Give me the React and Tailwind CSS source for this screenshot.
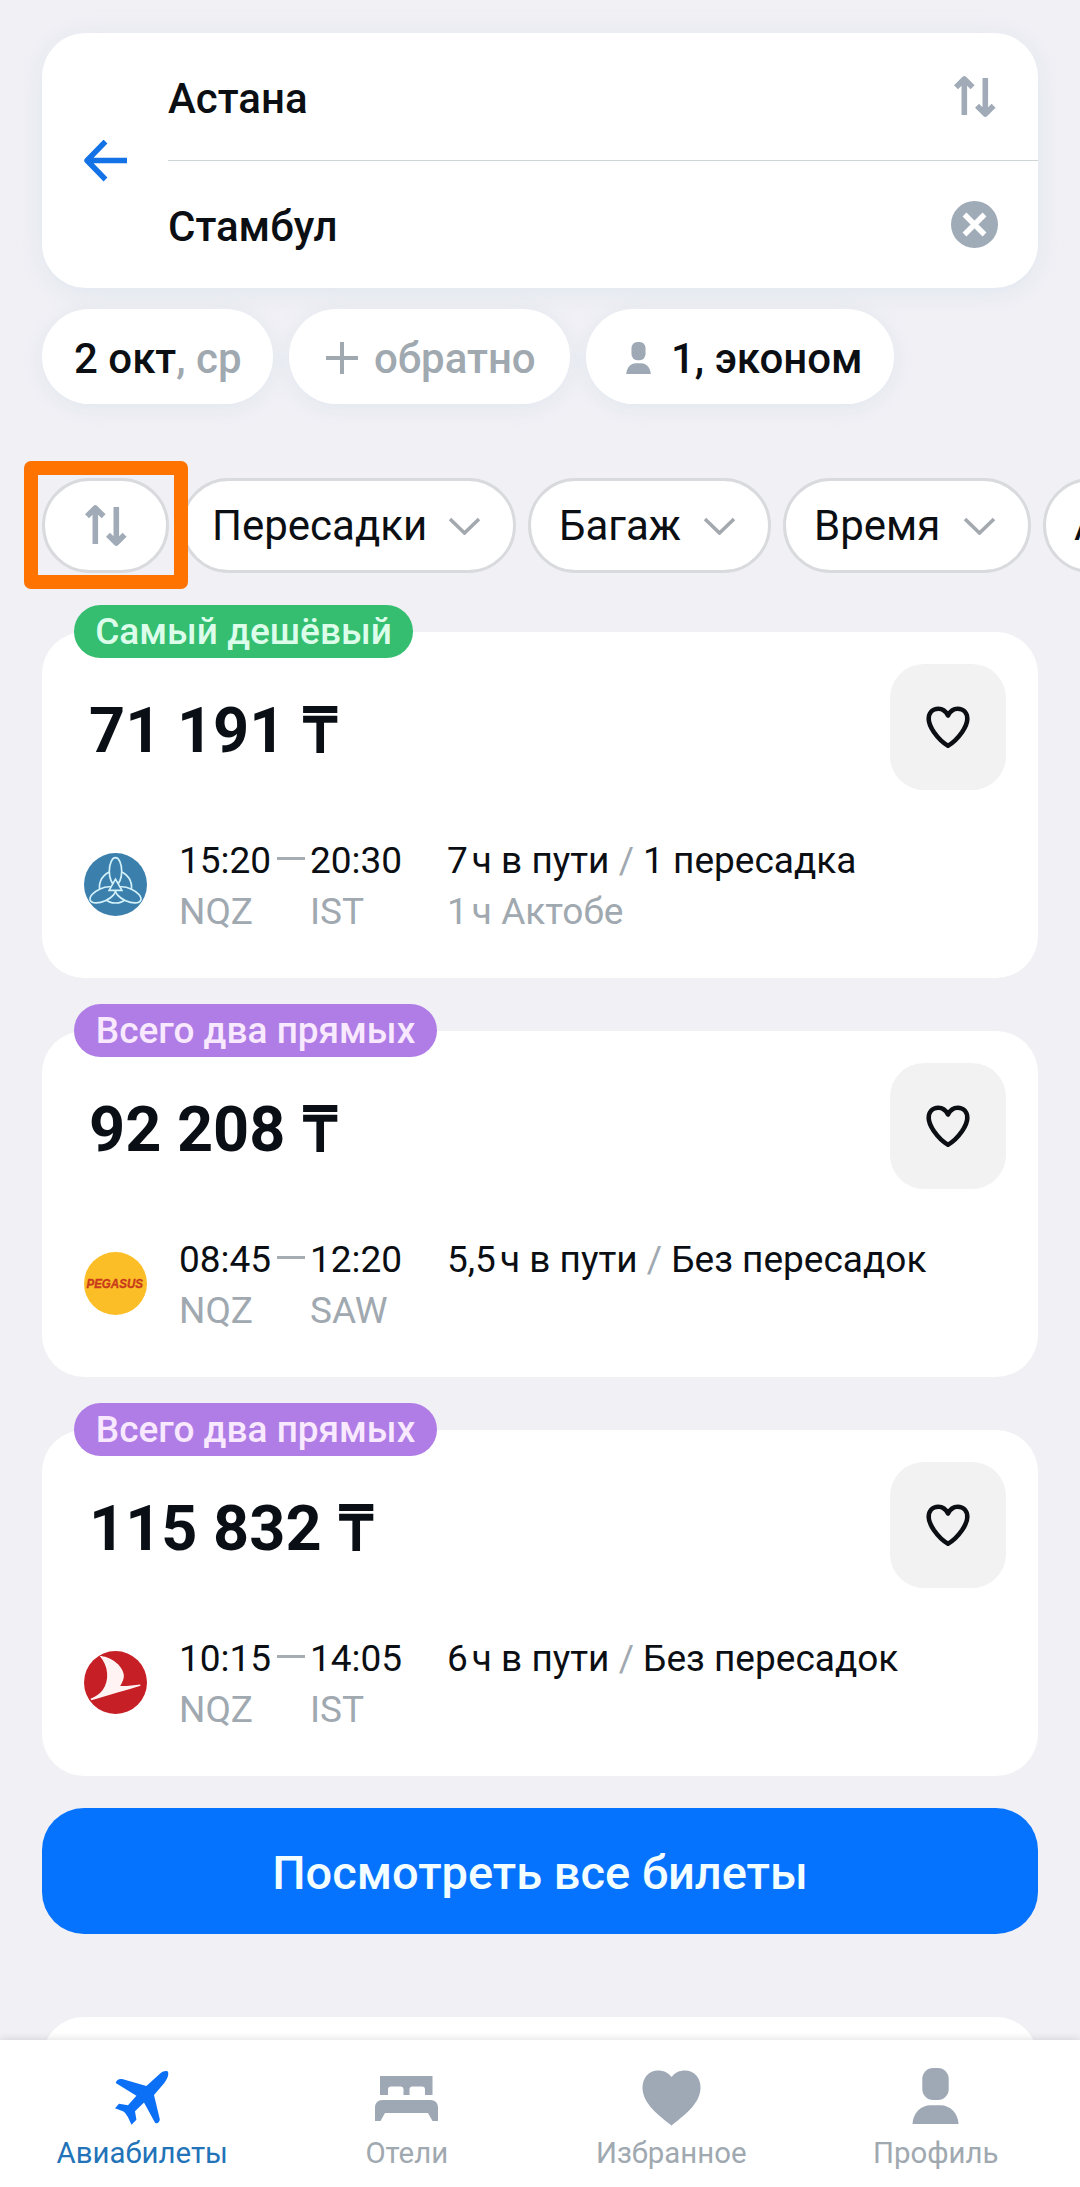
const tickets = [
  {
    id: 1,
    badge: "Самый дешёвый",
    badgeClass: "w-[339px] bg-[#35bd70] text-[#dcfdea]",
    price: "71 191",
    logo: "scat",
    departure: "15:20",
    arrival: "20:30",
    from: "NQZ",
    to: "IST",
    hours: "7",
    stops: "1 пересадка",
    layover: { hours: "1", city: "Актобе" },
  },
  {
    id: 2,
    badge: "Всего два прямых",
    badgeClass: "w-[363px] bg-[#af7de5] text-[#f9e9ff]",
    price: "92 208",
    logo: "pegasus",
    departure: "08:45",
    arrival: "12:20",
    from: "NQZ",
    to: "SAW",
    hours: "5,5",
    stops: "Без пересадок",
  },
  {
    id: 3,
    badge: "Всего два прямых",
    badgeClass: "w-[363px] bg-[#af7de5] text-[#f9e9ff]",
    price: "115 832",
    logo: "turkish",
    departure: "10:15",
    arrival: "14:05",
    from: "NQZ",
    to: "IST",
    hours: "6",
    stops: "Без пересадок",
  },
];

const SwapIcon = () => (
  <svg width="42" height="43" viewBox="0 0 42 43" fill="none" stroke="#a0abb7" strokeWidth="5.6" strokeLinejoin="round">
    <path d="M10.3 40V4M2 12.3l8.3-8.3 8.3 8.3" />
    <path d="M31.3 3v36M23 30.7l8.3 8.3 8.3-8.3" />
  </svg>
);

const BackIcon = () => (
  <svg width="44" height="42" viewBox="0 0 44 42" fill="none" stroke="#1272e6" strokeWidth="5.4" strokeLinejoin="round">
    <path d="M43 20.500H3M21.500 1.500L3 20.500 21.500 39.500" />
  </svg>
);

const ClearIcon = () => (
  <svg width="47" height="47" viewBox="0 0 47 47">
    <circle cx="23.5" cy="23.5" r="23.5" fill="#a0abb8" />
    <path d="M13.5 13.5l20 20M33.5 13.5l-20 20" stroke="#fff" strokeWidth="5.4" />
  </svg>
);

const ChevronIcon = () => (
  <svg width="32" height="19" viewBox="0 0 32 19" fill="none" stroke="#a3a9af" strokeWidth="3.6">
    <path d="M1 3L15.500 17 30 3" />
  </svg>
);

const PersonIcon = ({ width, height }) => (
  <svg width={width} height={height} viewBox="0 0 48 57" preserveAspectRatio="none" fill="#9fa9b6">
    <rect x="10.5" y="0" width="27" height="32.5" rx="11" />
    <path d="M0.5 57C1 46 9 38 19 38h10c10 0 18 8 18.500 19z" />
  </svg>
);

const HeartOutlineIcon = () => (
  <svg width="44" height="42" viewBox="0 0 44 42" fill="none" stroke="#0b0f14" strokeWidth="4.6" strokeLinejoin="round">
    <path d="M22 9.500C19.800 5 16 2.700 12.300 2.700 6.500 2.700 2.700 7 2.700 13c0 4.500 2.300 8.800 5.300 13.300C12 32 17 37 22 39.700c5-2.700 10-7.700 14-13.400 3-4.500 5.300-8.800 5.300-13.300 0-6-3.800-10.300-9.600-10.300C28 2.700 24.200 5 22 9.500z" />
  </svg>
);

const PlaneIcon = () => (
  <svg width="56" height="56" viewBox="0 0 56 56" fill="#0b70f5">
    <path d="M53.700 1.500c-2-1-5 0-7 1.500L32.400 16 9 9.300C5.500 8.600 2.500 9.500 1.700 13l20.700 12.800L14 35.300l-9-1.600-4 4.500 8 3.100c3 1.700 5.500 6.500 8.500 13.400l4.900-5-1.400-8.500 9-8.800 10.500 19.300c1.500 3 5.300 1.300 5.300-2.400L40 25l10.300-12C53 9.500 55.500 4 53.700 1.500z" />
  </svg>
);

const BedIcon = () => (
  <svg width="63" height="45" viewBox="0 0 63 45" fill="#9da8b4">
    <path d="M5 0h52.500v19H50v-5.500a3 3 0 0 0-3-3H37.500a3 3 0 0 0-3 3V19h-6v-5.500a3 3 0 0 0-3-3H16a3 3 0 0 0-3 3V19H5z" />
    <path d="M0 31.500C0 27 3 24 7.500 24h48c4.500 0 7.500 3 7.500 7.500V45h-5.500L53 37H10l-4.500 8H0z" />
  </svg>
);

const HeartIcon = () => (
  <svg width="59" height="56" viewBox="0 0 59 56" fill="#9fa9b6">
    <path d="M29.500 7C26 2.500 21.500.500 16 .500 7 .500.500 7.500.500 17.500c0 14 12 25 29 38 17-13 29-24 29-38C58.500 7.500 52 .500 43 .500c-5.500 0-10 2-13.500 6.500z" />
  </svg>
);

const AirlineLogo = ({ name }) => {
  if (name === "scat") {
    return (
      <svg width="63" height="63" viewBox="0 0 64 64" fill="#3b7fad" stroke="#d3f2fb" strokeWidth="1.7">
        <circle cx="32" cy="32" r="32" stroke="none" />
        <circle cx="32" cy="34.500" r="16.300" />
        <ellipse cx="19" cy="42.500" rx="13.800" ry="6.600" transform="rotate(-24 19 42.500)" />
        <ellipse cx="45" cy="42.500" rx="13.800" ry="6.600" transform="rotate(24 45 42.500)" />
        <ellipse cx="32" cy="18.500" rx="6.300" ry="13.800" />
        <path d="M32 26.500l6.500 11.500h-13z" />
      </svg>
    );
  }

  if (name === "pegasus") {
    return (
      <svg width="63" height="63" viewBox="0 0 64 64">
        <circle cx="32" cy="32" r="32" fill="#fcbe26" />
        <text
          transform="translate(2.500 36.500) scale(0.87 1)"
          fill="#c93a1c"
          stroke="#c93a1c"
          strokeWidth="0.4"
          fontFamily="Liberation Sans, sans-serif"
          fontSize="13.500"
          fontWeight="700"
          fontStyle="italic"
        >
          PEGASUS
        </text>
      </svg>
    );
  }

  return (
    <svg width="63" height="63" viewBox="0 0 64 64">
      <circle cx="32" cy="32" r="32" fill="#c62026" />
      <path
        d="M16 5c9 0 23.500 8.500 24.500 19.500 .300 4-1.500 7.500-3.700 11 6 .200 14-.500 20.300-1.500l.300 1.200C45 39 24 45 7.300 50l-.700-1.500C12 46 16 43.500 19 39.500 26 30 25 15 16 5z"
        fill="#fff3f3"
      />
    </svg>
  );
};

const SearchForm = () => (
  <div className="flex h-[255px] rounded-[44px] bg-white shadow-[0_4px_26px_rgba(160,200,215,0.22)]">
    <div className="flex w-[126px] items-center pl-[42px]">
      <BackIcon />
    </div>
    <div className="flex flex-1 flex-col text-[42px] font-medium text-[#0b0f14]">
      <div className="flex h-[128px] items-center justify-between border-b border-[#cfd4d6] pr-[42px]">
        <span className="pt-[4px]">Астана</span>
        <SwapIcon />
      </div>
      <div className="flex h-[127px] items-center justify-between pr-[40px]">
        <span className="pt-[4px]">Стамбул</span>
        <ClearIcon />
      </div>
    </div>
  </div>
);

const TripOptions = () => (
  <div className="mt-[21px] flex gap-[16px] text-[42px] font-medium text-[#0b0f14]">
    <div className="flex h-[95px] w-[231px] items-center rounded-full bg-white pt-[3px] pl-[32px] shadow-[0_4px_22px_rgba(160,200,215,0.2)]">
      <span>
        2 окт<span className="text-[#a0a8b0]">, ср</span>
      </span>
    </div>
    <div className="flex h-[95px] w-[281px] items-center rounded-full bg-white pt-[3px] pl-[37px] text-[#a0a8b0] shadow-[0_4px_22px_rgba(160,200,215,0.2)]">
      <svg width="32" height="32" viewBox="0 0 32 32" stroke="#a0a8b0" strokeWidth="4">
        <path d="M16 0v32M0 16h32" />
      </svg>
      <span className="ml-[16px]">обратно</span>
    </div>
    <div className="flex h-[95px] w-[308px] items-center rounded-full bg-white pt-[3px] pl-[40px] shadow-[0_4px_22px_rgba(160,200,215,0.2)]">
      <PersonIcon width="25" height="32" />
      <span className="ml-[20px]">1, эконом</span>
    </div>
  </div>
);

const FilterChip = ({ label, className }) => (
  <div
    className={`flex h-[95px] shrink-0 items-center justify-between rounded-full border-[3px] border-[#d9dadd] bg-white pr-[32px] pl-[28px] text-[42px] text-[#0b0f14] ${className}`}
  >
    <span>{label}</span>
    <ChevronIcon />
  </div>
);

const Filters = () => (
  <div className="mt-[74px] -mr-[42px] flex gap-[12px]">
    <div className="relative flex h-[95px] w-[127px] shrink-0 items-center justify-center rounded-full border-[3px] border-[#d9dadd] bg-white">
      <SwapIcon />
      {/* highlight frame around the sort button */}
      <div className="absolute -top-[20px] -left-[21px] z-10 h-[128px] w-[164px] rounded-[7px] border-[14px] border-[#ff7300]" />
    </div>
    <FilterChip label="Пересадки" className="w-[335px]" />
    <FilterChip label="Багаж" className="w-[243px]" />
    <FilterChip label="Время" className="w-[248px]" />
    <FilterChip label="Авиакомпании" className="w-[400px]" />
  </div>
);

const Hours = ({ value }) => (
  <>
    {value}
    <span className="ml-[4px]">ч</span>
  </>
);

const Ticket = ({ ticket }) => (
  <article className="relative flex h-[346px] flex-col rounded-[42px] bg-white pt-[32px] pr-[32px] pl-[42px]">
    <div
      className={`absolute -top-[27px] left-[32px] flex h-[53px] items-center justify-center rounded-full text-[37px] font-medium whitespace-nowrap ${ticket.badgeClass}`}
    >
      {ticket.badge}
    </div>
    <div className="flex items-center justify-between">
      <h2 className="pt-[8px] pl-[5px] text-[63px] leading-[76px] font-bold text-[#0a0f16]">
        {ticket.price} <span className="ml-[2px]">₸</span>
      </h2>
      <button className="flex h-[126px] w-[116px] items-center justify-center rounded-[34px] bg-[#f2f2f3]">
        <HeartOutlineIcon />
      </button>
    </div>
    <div className="mt-[45px] flex text-[37px] leading-[51px] text-[#0b0f14]">
      <div className="w-[95px] pt-[18px]">
        <AirlineLogo name={ticket.logo} />
      </div>
      <div className="w-[98px]">
        <p>{ticket.departure}</p>
        <p className="text-[#a0a8b0]">{ticket.from}</p>
      </div>
      <div className="mt-[22px] h-[3px] w-[28px] bg-[#a5adb2]" />
      <div className="ml-[5px] w-[137px]">
        <p>{ticket.arrival}</p>
        <p className="text-[#a0a8b0]">{ticket.to}</p>
      </div>
      <div className="whitespace-nowrap">
        <p>
          <Hours value={ticket.hours} /> в пути <span className="text-[#a0a8b0]">/</span> {ticket.stops}
        </p>
        {ticket.layover && (
          <p className="text-[#a0a8b0]">
            <Hours value={ticket.layover.hours} /> {ticket.layover.city}
          </p>
        )}
      </div>
    </div>
  </article>
);

const NavItem = ({ label, active, children }) => (
  <a className={`flex flex-1 flex-col items-center text-[29.4px] leading-[36px] ${active ? "text-[#2273b8]" : "text-[#a0a8b0]"}`}>
    <span className="flex h-[62px] items-center">{children}</span>
    <span className="mt-[6px]">{label}</span>
  </a>
);

const BottomNav = () => (
  <nav className="relative flex h-[147px] shrink-0 bg-white pr-[12px] pl-[10px] pt-[27px] shadow-[0_-1px_8px_rgba(0,0,0,0.12)]">
    <NavItem label="Авиабилеты" active>
      <PlaneIcon />
    </NavItem>
    <NavItem label="Отели">
      <BedIcon />
    </NavItem>
    <NavItem label="Избранное">
      <HeartIcon />
    </NavItem>
    <NavItem label="Профиль">
      <span className="pb-[4px]">
        <PersonIcon width="47" height="56" />
      </span>
    </NavItem>
  </nav>
);

export default function App() {
  return (
    <div className="flex h-[2187px] w-[1080px] flex-col overflow-hidden bg-[#f1f0f5] font-[Roboto,sans-serif]">
      <main className="flex h-[2040px] shrink-0 flex-col overflow-hidden px-[42px] pt-[33px]">
        <div className="shrink-0">
          <SearchForm />
          <TripOptions />
          <Filters />
        </div>
        <div className="mt-[59px] flex shrink-0 flex-col gap-[53px]">
          {tickets.map((ticket) => (
            <Ticket key={ticket.id} ticket={ticket} />
          ))}
        </div>
        <button className="mt-[32px] h-[126px] shrink-0 rounded-[42px] bg-[#0673ff] pt-[4px] text-[47px] font-medium text-[#f2feff]">
          Посмотреть все билеты
        </button>
        <div className="mt-[83px] h-[100px] shrink-0 rounded-[42px] bg-white" />
      </main>
      <BottomNav />
    </div>
  );
}
